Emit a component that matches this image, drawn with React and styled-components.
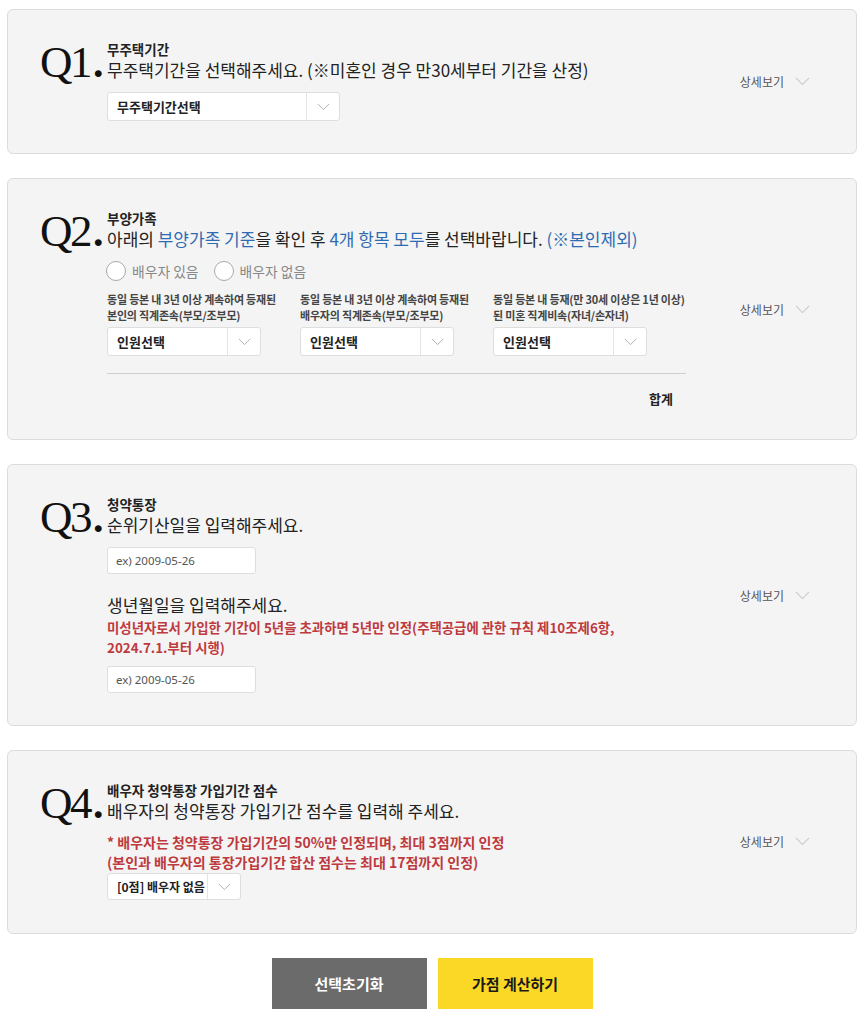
import styled, { createGlobalStyle } from "styled-components";

const GlobalStyle = createGlobalStyle`
  body {
    margin: 0;
    background: #fff;
    font-family: "Noto Sans CJK KR", "Noto Sans", sans-serif;
    color: #222;
  }
  * { box-sizing: border-box; }
`;

const Page = styled.div`
  width: 867px;
  padding: 9px 10px 16px 7px;
  display: flex;
  flex-direction: column;
  gap: 24px;
`;

const Card = styled.section`
  display: flex;
  align-items: flex-start;
  background: #f4f4f4;
  border: 1px solid #dcdcdc;
  border-radius: 6px;
  padding: 30px 46px ${(p) => p.$bottom || 31}px 32px;
`;

const QNum = styled.div`
  width: 67px;
  flex-shrink: 0;
  font-family: "Liberation Serif", "DejaVu Serif", serif;
  font-size: 45px;
  line-height: 44px;
  letter-spacing: -2.5px;
  color: #111;

  span {
    font-weight: bold;
    font-size: 42px;
    margin-left: 3px;
  }
`;

const Body = styled.div`
  flex: 1;
  display: flex;
  flex-direction: column;
  align-items: flex-start;
`;

const Title = styled.div`
  font-size: 13.5px;
  line-height: 18px;
  font-weight: 700;
  color: #222;
`;

const Subtitle = styled.div`
  font-size: 17px;
  line-height: 24px;
  color: #222;
  margin-top: ${(p) => p.$top || 0}px;
`;

const Blue = styled.span`
  color: #2e6bb3;
`;

const Note = styled.div`
  font-size: ${(p) => p.$size || 13.4}px;
  line-height: 20px;
  font-weight: 700;
  color: #bd3a3e;
  margin-top: ${(p) => p.$top || 0}px;
`;

const SelectBox = styled.div`
  display: flex;
  width: ${(p) => p.$width}px;
  height: ${(p) => p.$height || 29}px;
  margin-top: ${(p) => p.$top || 0}px;
  background: #fff;
  border: 1px solid #dedede;
  border-radius: 3px;
`;

const SelectText = styled.div`
  flex: 1;
  display: flex;
  align-items: center;
  padding-left: 9px;
  font-size: ${(p) => p.$size || 13}px;
  font-weight: 600;
  color: #222;
  white-space: nowrap;
  overflow: hidden;
`;

const SelectArrow = styled.div`
  width: 33px;
  flex-shrink: 0;
  border-left: 1px solid #e4e4e4;
  display: flex;
  align-items: center;
  justify-content: center;
`;

const Input = styled.input`
  width: 149px;
  height: 27px;
  margin-top: ${(p) => p.$top || 0}px;
  border: 1px solid #dedede;
  border-radius: 3px;
  background: #fff;
  padding: 0 8px;
  font-family: "Noto Sans", sans-serif;
  font-size: 11.5px;
  outline: none;

  &::placeholder {
    color: #555;
  }
`;

const Detail = styled.div`
  align-self: center;
  display: flex;
  align-items: center;
  gap: 11px;
  font-size: 12px;
  color: #555;
  margin-top: 2px;
`;

const RadioRow = styled.div`
  display: flex;
  align-items: center;
  gap: 16px;
  margin-top: 9px;
  height: 22px;
`;

const RadioItem = styled.label`
  display: flex;
  align-items: center;
  gap: 6px;
  font-size: 13.8px;
  color: #888;
`;

const Circle = styled.span`
  width: 20px;
  height: 20px;
  border-radius: 50%;
  background: #fff;
  border: 1px solid #a9a9a9;
  margin-left: -1px;
`;

const Columns = styled.div`
  display: grid;
  grid-template-columns: repeat(3, 193px);
  margin-top: 9px;
`;

const ColLabel = styled.div`
  font-size: 11px;
  line-height: 16px;
  font-weight: 600;
  color: #444;
  letter-spacing: -0.2px;
  white-space: nowrap;
`;

const Divider = styled.div`
  width: 579px;
  border-top: 1px solid #cfcfcf;
  margin-top: 17px;
`;

const Total = styled.div`
  width: 579px;
  text-align: right;
  padding-right: 13px;
  margin-top: 16px;
  font-size: 13px;
  line-height: 18px;
  font-weight: 700;
  color: #222;
`;

const Buttons = styled.div`
  display: flex;
  justify-content: center;
  gap: 11px;
`;

const Button = styled.button`
  width: 155px;
  height: 51px;
  border: none;
  background: ${(p) => (p.$primary ? "#fcd826" : "#6b6b6b")};
  color: ${(p) => (p.$primary ? "#1a1a1a" : "#fff")};
  font-family: "Noto Sans CJK KR", sans-serif;
  font-size: 15px;
  font-weight: 700;
`;

function Chevron({ color = "#c8c8c8", w = 15 }) {
  return (
    <svg width={w} height={w / 2 + 1} viewBox="0 0 16 9" fill="none">
      <path d="M1 1 L8 8 L15 1" stroke={color} strokeWidth="1.1" />
    </svg>
  );
}

function Select({ label, width, height, top, size }) {
  return (
    <SelectBox $width={width} $height={height} $top={top}>
      <SelectText $size={size}>{label}</SelectText>
      <SelectArrow>
        <Chevron color="#aaa" w={13} />
      </SelectArrow>
    </SelectBox>
  );
}

function DetailLink() {
  return (
    <Detail>
      상세보기
      <Chevron />
    </Detail>
  );
}

function Q({ n }) {
  return (
    <QNum>
      Q{n}
      <span>.</span>
    </QNum>
  );
}

const family = [
  ["동일 등본 내 3년 이상 계속하여 등재된", "본인의 직계존속(부모/조부모)"],
  ["동일 등본 내 3년 이상 계속하여 등재된", "배우자의 직계존속(부모/조부모)"],
  ["동일 등본 내 등재(만 30세 이상은 1년 이상)", "된 미혼 직계비속(자녀/손자녀)"],
];

export default function App() {
  return (
    <>
      <GlobalStyle />
      <Page>
        <Card $bottom={32}>
          <Q n={1} />
          <Body>
            <Title>무주택기간</Title>
            <Subtitle>무주택기간을 선택해주세요. (※미혼인 경우 만30세부터 기간을 산정)</Subtitle>
            <Select label="무주택기간선택" width={233} top={10} />
          </Body>
          <DetailLink />
        </Card>

        <Card $bottom={31}>
          <Q n={2} />
          <Body>
            <Title>부양가족</Title>
            <Subtitle>
              아래의 <Blue>부양가족 기준</Blue>을 확인 후 <Blue>4개 항목 모두</Blue>를 선택바랍니다.{" "}
              <Blue>(※본인제외)</Blue>
            </Subtitle>
            <RadioRow>
              <RadioItem>
                <Circle />
                배우자 있음
              </RadioItem>
              <RadioItem>
                <Circle />
                배우자 없음
              </RadioItem>
            </RadioRow>
            <Columns>
              {family.map(([a, b], i) => (
                <div key={i}>
                  <ColLabel>{a}</ColLabel>
                  <ColLabel>{b}</ColLabel>
                  <Select label="인원선택" width={154} height={29} top={4} />
                </div>
              ))}
            </Columns>
            <Divider />
            <Total>합계</Total>
          </Body>
          <DetailLink />
        </Card>

        <Card $bottom={32}>
          <Q n={3} />
          <Body>
            <Title>청약통장</Title>
            <Subtitle>순위기산일을 입력해주세요.</Subtitle>
            <Input placeholder="ex) 2009-05-26" $top={10} />
            <Subtitle $top={19}>생년월일을 입력해주세요.</Subtitle>
            <Note>
              미성년자로서 가입한 기간이 5년을 초과하면 5년만 인정(주택공급에 관한 규칙 제10조제6항,
              <br />
              2024.7.1.부터 시행)
            </Note>
            <Input placeholder="ex) 2009-05-26" $top={9} />
          </Body>
          <DetailLink />
        </Card>

        <Card $bottom={33}>
          <Q n={4} />
          <Body>
            <Title>배우자 청약통장 가입기간 점수</Title>
            <Subtitle>배우자의 청약통장 가입기간 점수를 입력해 주세요.</Subtitle>
            <Note $top={9} $size={14}>
              * 배우자는 청약통장 가입기간의 50%만 인정되며, 최대 3점까지 인정
              <br />
              (본인과 배우자의 통장가입기간 합산 점수는 최대 17점까지 인정)
            </Note>
            <Select label="[0점] 배우자 없음" width={134} height={27} top={1} size={12} />
          </Body>
          <DetailLink />
        </Card>

        <Buttons>
          <Button>선택초기화</Button>
          <Button $primary>가점 계산하기</Button>
        </Buttons>
      </Page>
    </>
  );
}
